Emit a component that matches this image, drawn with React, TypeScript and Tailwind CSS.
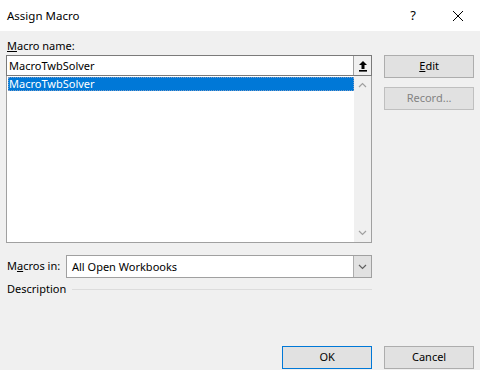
import React from "react";

const font = { fontFamily: '"Noto Sans", "Open Sans", sans-serif' };

function UpIcon() {
  return (
    <svg width="10" height="12" viewBox="0 0 10 12">
      <path d="M5 1 L9 5 H6.5 V9 H3.5 V5 H1 Z" fill="#000" />
      <rect x="1" y="10" width="8" height="1.6" fill="#000" />
    </svg>
  );
}

function Chevron({ up, color = "#a0a0a0" }: { up?: boolean; color?: string }) {
  return (
    <svg width="9" height="6" viewBox="0 0 9 6">
      <path
        d={up ? "M1 5 L4.5 1.5 L8 5" : "M1 1 L4.5 4.5 L8 1"}
        fill="none"
        stroke={color}
        strokeWidth="1.2"
      />
    </svg>
  );
}

export default function App() {
  return (
    <div
      className="w-[480px] h-[370px] bg-[#f0f0f0] flex flex-col text-[11px] text-black overflow-hidden"
      style={font}
    >
      {/* Title bar */}
      <div className="h-[31px] bg-white flex items-center shrink-0">
        <div className="pl-[7px] text-[11.5px] flex-1">Assign Macro</div>
        <div className="w-[20px] text-center text-[13px] mr-[29px]">?</div>
        <svg width="12" height="12" viewBox="0 0 12 12" className="mr-[16px]">
          <path d="M1 1 L11 11 M11 1 L1 11" stroke="#000" strokeWidth="1" />
        </svg>
      </div>

      <div className="flex px-[6px] pt-[6px] gap-[12px] h-[339px]">
        {/* Left column */}
        <div className="w-[367px] flex flex-col">
          <div className="h-[18px] pl-[1px] leading-[18px]">
            <span className="underline">M</span>acro name:
          </div>
          <div className="h-[21px] bg-white border border-[#7a7a7a] flex">
            <div className="flex-1 pl-[2px] leading-[19px]">MacroTwbSolver</div>
            <div className="w-[18px] border-l border-[#a0a0a0] bg-[#f0f0f0] flex items-center justify-center">
              <UpIcon />
            </div>
          </div>
          <div className="h-[167px] bg-white border border-[#a0a0a0] border-t-0 flex">
            <div className="flex-1 pt-[1px] pl-[1px]">
              <div className="h-[14px] bg-[#0078d7] text-white leading-[13px] pl-[1px] outline-1 outline-dotted outline-[#7a9cc7] -outline-offset-1">
                MacroTwbSolver
              </div>
            </div>
            <div className="w-[17px] bg-[#f0f0f0] flex flex-col items-center justify-between py-[6px]">
              <Chevron up />
              <Chevron />
            </div>
          </div>

          <div className="flex items-center mt-[12px] h-[23px]">
            <div className="w-[60px] pl-[1px]">
              M<span className="underline">a</span>cros in:
            </div>
            <div className="flex-1 h-[23px] bg-white border border-[#a0a0a0] flex">
              <div className="flex-1 pl-[5px] leading-[21px]">All Open Workbooks</div>
              <div className="w-[18px] bg-[#e1e1e1] border-l border-[#adadad] flex items-center justify-center">
                <Chevron color="#606060" />
              </div>
            </div>
          </div>

          <div className="flex items-center mt-[1px] h-[20px]">
            <div className="pl-[1px] pr-[6px]">Description</div>
            <div className="flex-1 h-px bg-[#dcdcdc]" />
          </div>

          <div className="flex justify-end mt-[47px]">
            <div className="w-[90px] h-[23px] bg-[#e1e1e1] border border-[#0078d7] flex items-center justify-center">
              OK
            </div>
          </div>
        </div>

        {/* Right column */}
        <div className="w-[90px] flex flex-col">
          <div className="h-[18px]" />
          <div className="h-[23px] bg-[#e1e1e1] border border-[#adadad] flex items-center justify-center">
            <span>
              <span className="underline">E</span>dit
            </span>
          </div>
          <div className="h-[23px] mt-[9px] bg-[#e1e1e1] border border-[#bfbfbf] flex items-center justify-center text-[#838383]">
            Record...
          </div>
          <div className="h-[23px] mt-[236px] bg-[#e1e1e1] border border-[#adadad] flex items-center justify-center">
            Cancel
          </div>
        </div>
      </div>
    </div>
  );
}
